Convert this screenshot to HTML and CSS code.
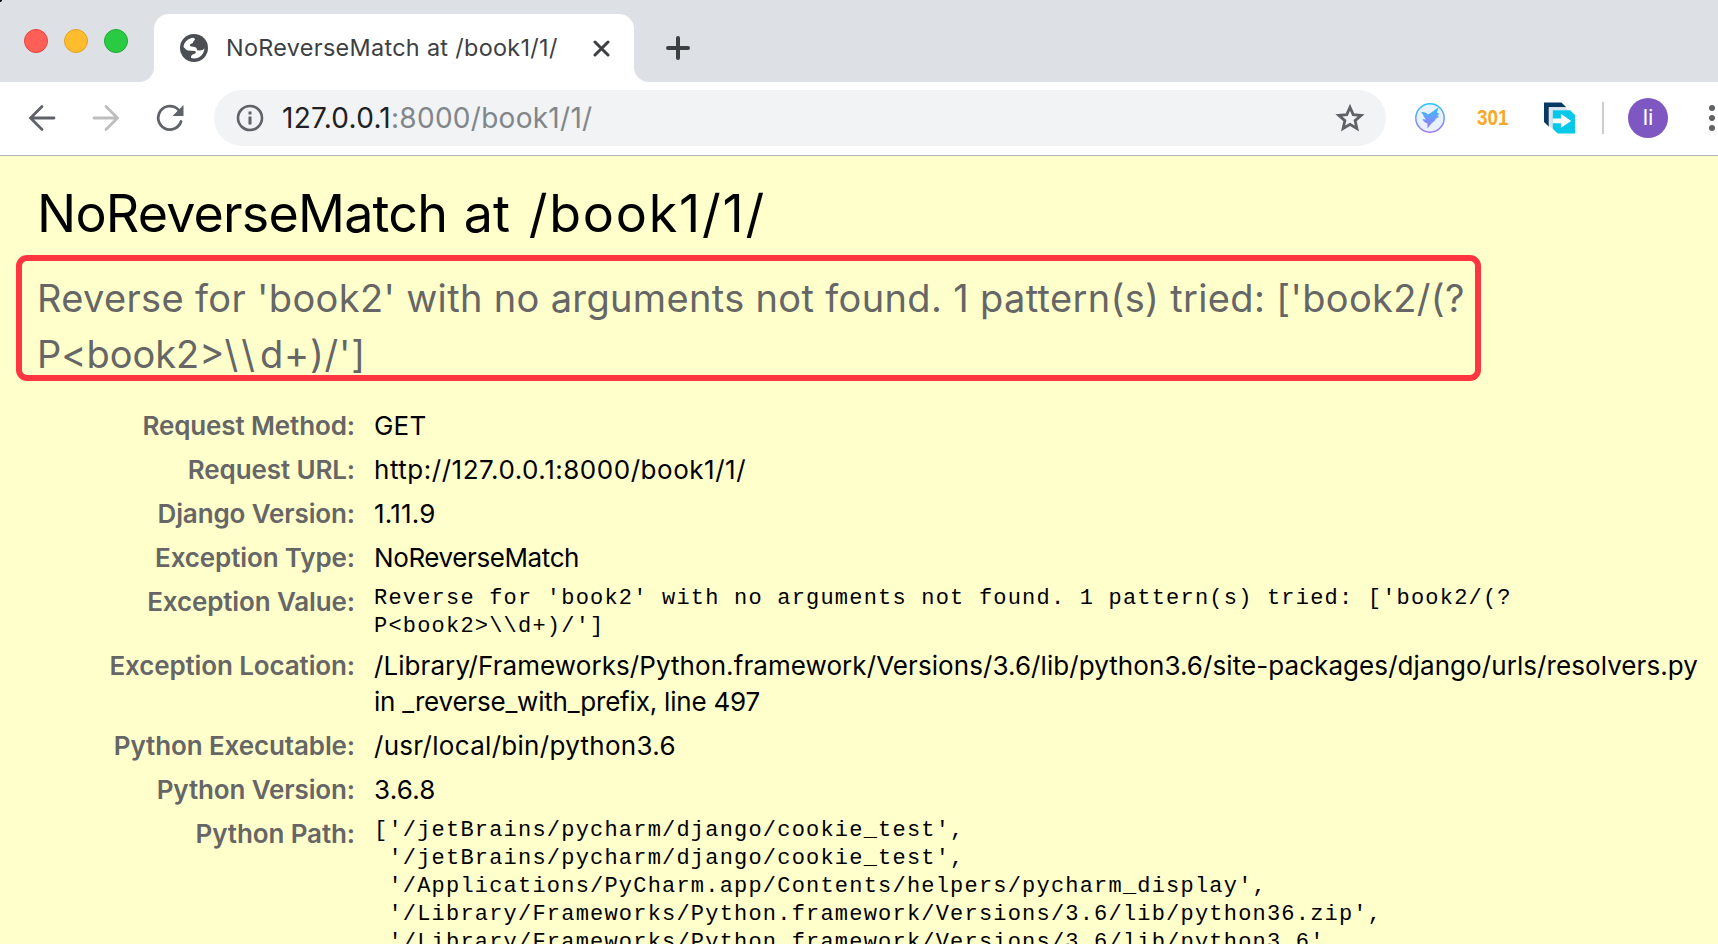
FILE: index.html
```html
<!DOCTYPE html>
<html lang="en">
<head>
<meta charset="utf-8">
<title>NoReverseMatch at /book1/1/</title>
<link rel="stylesheet" href="styles.css">
</head>
<body>
<header class="tabstrip">
  <div class="lights"><i class="light red"></i><i class="light amber"></i><i class="light green"></i></div>
  <div class="tab">
    <svg class="globe" viewBox="0 0 28 28"><circle cx="14" cy="14" r="14" fill="#4b4f54"/><path d="M3.500 13C4 8 8 4 13.500 3.700L15 5C15 6.500 12.800 7 13 9L10.500 10C9 12 10.500 12.500 13 12.700C16 12.800 17 14 17 16.300L20 16.500C22 16.500 23 15.500 24.500 14.500C24 20 20 24.300 14 24.500L11 24C10.800 21.500 12 20.500 14 20C16 19.500 16.300 18 15 17L8 16.500C6 16 5 14 3.500 13Z" fill="#fff"/></svg>
    <span class="tab-title">NoReverseMatch at /book1/1/</span>
    <svg class="close" viewBox="0 0 17 17"><path d="M2 2 15 15M15 2 2 15"/></svg>
  </div>
  <svg class="plus" viewBox="0 0 24 24"><path d="M12 2V22M2 12H22"/></svg>
</header>
<nav class="toolbar">
  <svg class="arrow" viewBox="0 0 28 28"><path d="M26 14H3M14 2.500 2.500 14 14 25.500"/></svg>
  <svg class="arrow next" viewBox="0 0 28 28"><path d="M2 14H25M14 2.500 25.500 14 14 25.500"/></svg>
  <svg class="reload" viewBox="0 0 28 28"><path class="ring" d="M25 17.500A11.700 11.700 0 1 1 22.500 5.900"/><path class="tip" d="M27.500 1V12H16.500Z"/></svg>
  <div class="omnibox">
    <svg class="info" viewBox="0 0 28 28"><circle cx="14" cy="14" r="12"/><path d="M12.500 7.500h3v3h-3zM12.500 12.500h3v8h-3z"/></svg>
    <span class="host">127.0.0.1</span><span class="path">:8000/book1/1/</span>
    <svg class="star" viewBox="0 0 30 30"><path d="M15 4.200 18.200 11.600 26.200 12.300 20.100 17.600 21.900 25.500 15 21.300 8.100 25.500 9.900 17.600 3.800 12.300 11.800 11.600Z"/></svg>
  </div>
  <svg class="bird" viewBox="0 0 30 30"><defs><linearGradient id="g" x1="0" y1="0" x2="0" y2="1"><stop offset="0" stop-color="#2bc4f5"/><stop offset=".5" stop-color="#6c9bff"/><stop offset="1" stop-color="#a070f0"/></linearGradient></defs><circle cx="15" cy="15" r="14.200" fill="#e8f1fe" stroke="url(#g)" stroke-width="1.500"/><path d="M6 9C9 9 11.500 9.500 13 11.500C16 10 19 7 23.500 4.500L22 9.500L24.500 11L22.500 12.500L24 14L21 15.500C20 18.500 17 19.500 16 21L12.500 25.500V20.500C10 19.500 8 18 7.500 16L11 16.500C8.500 14.500 8.500 11 6 9Z" fill="url(#g)"/></svg>
  <span class="code301">301</span>
  <svg class="share" viewBox="0 0 32 32"><path d="M0 0H18L23 5H5V25L0 20Z" fill="#063a63"/><path d="M5 5H22L25 8H9V27L5 24Z" fill="#dce3ea"/><path d="M9 8H27L32 13V32H14L9 27Z" fill="#06c8e8"/><path d="M9 16.500H17.500V11.500L28 19L17.500 26V21.500H9Z" fill="#fff"/></svg>
  <i class="divider"></i>
  <span class="avatar">li</span>
  <svg class="dots" viewBox="0 0 6 28"><circle cx="3" cy="4" r="3"/><circle cx="3" cy="14" r="3"/><circle cx="3" cy="24" r="3"/></svg>
</nav>
<main class="summary">
  <h1><span class="name">NoReverseMatch</span> at <span class="route">/book1/1/</span></h1>
  <h2>Reverse for 'book2' with no arguments not found. 1 pattern(s) tried: ['book2/(?<br><span class="group">P&lt;book2&gt;</span><span class="slashes">\\</span><span class="rest">d+)/']</span></h2>
  <table class="meta">
    <tr><th>Request Method:</th><td>GET</td></tr>
    <tr><th>Request URL:</th><td class="url">http://127.0.0.1:8000/book1/1/</td></tr>
    <tr><th>Django Version:</th><td>1.11.9</td></tr>
    <tr><th>Exception Type:</th><td class="type">NoReverseMatch</td></tr>
    <tr><th>Exception Value:</th><td><pre>Reverse for 'book2' with no arguments not found. 1 pattern(s) tried: ['book2/(?
P&lt;book2&gt;\\d+)/']</pre></td></tr>
    <tr><th>Exception Location:</th><td class="location">/Library/Frameworks/Python.framework/Versions/3.6/lib/python3.6/site-packages/django/urls/resolvers.py<br><span class="func">in _reverse_with_prefix, line 497</span></td></tr>
    <tr><th>Python Executable:</th><td class="exe">/usr/local/bin/python3.6</td></tr>
    <tr><th>Python Version:</th><td>3.6.8</td></tr>
    <tr><th>Python Path:</th><td><pre>['/jetBrains/pycharm/django/cookie_test',
 '/jetBrains/pycharm/django/cookie_test',
 '/Applications/PyCharm.app/Contents/helpers/pycharm_display',
 '/Library/Frameworks/Python.framework/Versions/3.6/lib/python36.zip',
 '/Library/Frameworks/Python.framework/Versions/3.6/lib/python3.6',</pre></td></tr>
  </table>
  <div class="highlight"></div>
</main>
</body>
</html>
```
FILE: styles.css
```css
* { box-sizing: border-box; }
html, body { margin: 0; height: 944px; overflow: hidden; }
body { background: #ffffcc; color: #000; font-family: Inter, "Liberation Sans", sans-serif; }
svg { display: block; flex: none; }

.tabstrip { display: flex; height: 82px; background: #dde0e5; }
.lights { display: flex; gap: 16px; width: 154px; padding: 29px 0 0 24px; background: radial-gradient(circle at 0 0, #000 1.5px, transparent 2.5px); }
.light { width: 24px; height: 24px; border-radius: 50%; border: 1px solid; }
.red { background: #ff5f57; border-color: #e9443e; }
.amber { background: #ffbd2e; border-color: #e0a028; }
.green { background: #28cb41; border-color: #1faa32; }
.tab { display: flex; align-items: flex-start; width: 480px; height: 68px; margin-top: 14px; padding: 20px 0 0 26px; background: #fff; border-radius: 15px 15px 0 0; position: relative; }
.tab::before, .tab::after { content: ""; position: absolute; bottom: 0; width: 15px; height: 15px; }
.tab::before { left: -15px; background: radial-gradient(circle at 0 0, transparent 14.5px, #fff 15.5px); }
.tab::after { right: -15px; background: radial-gradient(circle at 100% 0, transparent 14.5px, #fff 15.5px); }
.globe { width: 28px; height: 28px; }
.tab-title { margin-left: 18px; width: 347px; font-size: 23.4px; line-height: 28px; letter-spacing: .32px; color: #3c4043; white-space: nowrap; }
.close { width: 17px; height: 17px; margin: 5.500px 0 0 20px; }
.close path { fill: none; stroke: #3c4043; stroke-width: 3; stroke-linecap: round; }
.plus { width: 24px; height: 24px; margin: 36px 0 0 32px; }
.plus path { fill: none; stroke: #3c4043; stroke-width: 4; stroke-linecap: round; }

.toolbar { display: flex; align-items: center; height: 74px; padding: 0 0 2px 28px; background: #fff; border-bottom: 1px solid #b3b3b3; }
.arrow { width: 28px; height: 28px; }
.arrow path { fill: none; stroke: #5f6368; stroke-width: 2.800; stroke-linecap: round; }
.arrow.next { margin-left: 36px; }
.arrow.next path { stroke: #bdbdbd; }
.reload { width: 28px; height: 28px; margin-left: 36px; }
.ring { fill: none; stroke: #5f6368; stroke-width: 2.800; stroke-linecap: round; }
.tip { fill: #5f6368; }
.omnibox { display: flex; align-items: center; width: 1172px; height: 56px; margin-left: 30px; padding: 0 21px 0 22px; border-radius: 28px; background: #f1f3f4; font-size: 28px; line-height: 36px; letter-spacing: .28px; }
.info { width: 28px; height: 28px; margin-right: 18px; }
.info circle { fill: none; stroke: #5f6368; stroke-width: 2.600; }
.info path { fill: #5f6368; }
.host { color: #202124; }
.path { color: #80868b; }
.star { width: 30px; height: 30px; margin-left: auto; }
.star path { fill: none; stroke: #5f6368; stroke-width: 2.800; }
.bird { width: 30px; height: 30px; margin-left: 29px; }
.code301 { width: 31px; margin-left: 32px; font: bold 22px "Liberation Sans", sans-serif; color: #f9a825; transform: scaleX(.86); transform-origin: left; }
.share { width: 31px; height: 32px; margin-left: 36px; }
.divider { width: 2px; height: 32px; margin-left: 27px; background: #ccc; flex: none; }
.avatar { display: flex; align-items: center; justify-content: center; width: 40px; height: 40px; margin-left: 24px; border-radius: 50%; background: #7e57c2; color: #fff; font: 22px Roboto, sans-serif; flex: none; }
.dots { width: 6px; height: 28px; margin-left: 41px; fill: #5f6368; }

.summary { padding: 26px 0 0 37px; white-space: nowrap; }
h1, h2 { margin: 0; font-weight: 400; }
h1 { margin-bottom: 24px; font-size: 52px; line-height: 64px; word-spacing: 2px; }
.name { letter-spacing: -.8px; }
.route { margin-left: 2px; letter-spacing: 1.800px; }
h2 { font-size: 38px; line-height: 56px; letter-spacing: .34px; color: #666; }
.group { letter-spacing: 0; }
.slashes { letter-spacing: 5px; }
.rest { letter-spacing: .8px; }
.meta { margin-top: 22px; border-spacing: 0; }
th, td { padding: 4px 0; font-size: 26px; line-height: 36px; font-weight: 400; vertical-align: top; }
th { width: 337px; padding-right: 19px; text-align: right; color: #666; font-weight: 600; letter-spacing: -.12px; }
td { letter-spacing: .2px; }
.url { letter-spacing: .53px; }
.type { letter-spacing: -.4px; }
.location { letter-spacing: .074px; }
.func { letter-spacing: -.2px; }
.exe { letter-spacing: .3px; }
pre { margin: 0; padding-top: 1px; margin-bottom: -1px; font: 22px/28px "Liberation Mono", monospace; letter-spacing: 1.2px; }
.highlight { position: absolute; left: 16px; top: 255px; width: 1465px; height: 126px; border: 6px solid #ff3640; border-radius: 11px; }
```
